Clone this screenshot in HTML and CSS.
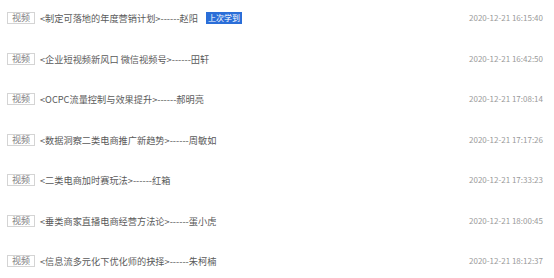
FILE: index.html
```html
<!DOCTYPE html>
<html lang="zh-CN">
<head>
<meta charset="utf-8">
<title>课程列表</title>
<link rel="stylesheet" href="styles.css">
</head>
<body>
<ul class="list">
  <li class="row">
    <span class="tag">视频</span>
    <span class="title">&lt;制定可落地的年度营销计划&gt;------赵阳</span>
    <span class="badge">上次学到</span>
    <span class="date">2020-12-21 16:15:40</span>
  </li>
  <li class="row">
    <span class="tag">视频</span>
    <span class="title">&lt;企业短视频新风口 微信视频号&gt;------田轩</span>
    <span class="date">2020-12-21 16:42:50</span>
  </li>
  <li class="row">
    <span class="tag">视频</span>
    <span class="title">&lt;OCPC流量控制与效果提升&gt;------郝明亮</span>
    <span class="date">2020-12-21 17:08:14</span>
  </li>
  <li class="row">
    <span class="tag">视频</span>
    <span class="title">&lt;数据洞察二类电商推广新趋势&gt;------周敏如</span>
    <span class="date">2020-12-21 17:17:26</span>
  </li>
  <li class="row">
    <span class="tag">视频</span>
    <span class="title">&lt;二类电商加时赛玩法&gt;------红箱</span>
    <span class="date">2020-12-21 17:33:23</span>
  </li>
  <li class="row">
    <span class="tag">视频</span>
    <span class="title">&lt;垂类商家直播电商经营方法论&gt;------蛋小虎</span>
    <span class="date">2020-12-21 18:00:45</span>
  </li>
  <li class="row">
    <span class="tag">视频</span>
    <span class="title">&lt;信息流多元化下优化师的抉择&gt;------朱柯楠</span>
    <span class="date">2020-12-21 18:12:37</span>
  </li>
</ul>
</body>
</html>
```

FILE: styles.css
```css
html, body {
  margin: 0;
  padding: 0;
  background: #ffffff;
  overflow: hidden;
}

body {
  font-family: "Noto Sans CJK SC", "Noto Sans", sans-serif;
  font-size: 9.2px;
  color: #555555;
}

.list {
  list-style: none;
  margin: 0;
  padding: 0 11px 0 7px;
}

.row {
  display: flex;
  align-items: flex-start;
  box-sizing: border-box;
  height: 40.5px;
  padding-top: 12px;
}

.tag {
  box-sizing: border-box;
  width: 28px;
  height: 12px;
  border: 1px solid #d4d4d4;
  color: #808080;
  font-size: 9px;
  line-height: 10px;
  text-align: center;
  flex: none;
}

.title {
  margin-left: 5px;
  line-height: 12px;
  color: #5a5a5a;
  white-space: nowrap;
}

.badge {
  margin-left: 8px;
  padding: 0 2px;
  height: 12px;
  line-height: 12px;
  font-size: 8px;
  background: #2a6ed8;
  color: #ffffff;
}

.date {
  margin-left: auto;
  line-height: 12px;
  font-size: 8px;
  color: #9a9a9a;
  white-space: nowrap;
}
```
